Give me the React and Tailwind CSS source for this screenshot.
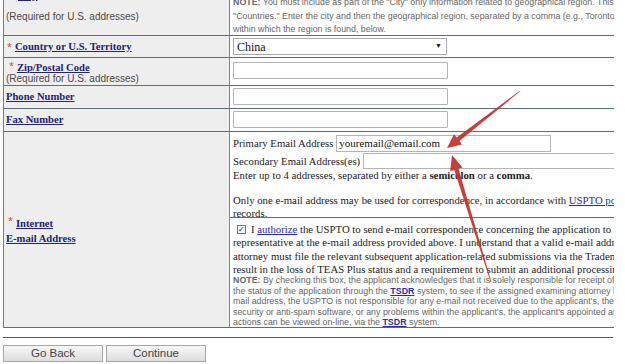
import React from "react";

function arrowPoints(tail, tip, tailW, shaftW, headLen, headW) {
  const dx = tip[0] - tail[0];
  const dy = tip[1] - tail[1];
  const len = Math.hypot(dx, dy);
  const ux = dx / len, uy = dy / len;
  const px = -uy, py = ux;
  const bx = tip[0] - ux * headLen, by = tip[1] - uy * headLen;
  const pts = [
    [tail[0] + px * tailW, tail[1] + py * tailW],
    [bx + px * shaftW, by + py * shaftW],
    [bx + px * headW, by + py * headW],
    [tip[0], tip[1]],
    [bx - px * headW, by - py * headW],
    [bx - px * shaftW, by - py * shaftW],
    [tail[0] - px * tailW, tail[1] - py * tailW],
  ];
  return pts.map((p) => p[0].toFixed(1) + "," + p[1].toFixed(1)).join(" ");
}

function Star() {
  return <span className="text-[#c8453e] text-[9px] font-normal align-top mr-[3px]">*</span>;
}

function Label({ children }) {
  return (
    <span className="font-['Liberation_Serif',serif] font-bold text-[10.6px] text-[#23236e] underline">
      {children}
    </span>
  );
}

function Field({ w = "w-[215px]" }) {
  return <div className={`${w} h-[17px] border border-[#b4b4b4] bg-white rounded-[1px]`} />;
}

const leftCls = "w-[226px] shrink-0 bg-[#eeeeee] border-r border-[#7b8a93] pl-[2px]";
const rightCls = "flex-1 min-w-0 overflow-hidden bg-white pl-[3px]";
const rowCls = "flex border-b border-[#5a6f7c]";
const sansNote = "font-['Liberation_Sans',sans-serif] text-[8.85px] text-[#666] whitespace-nowrap";
const serifTxt = "font-['Liberation_Serif',serif] text-[10.75px] text-[#222] whitespace-nowrap";

export default function App() {
  return (
    <div className="relative w-[625px] h-[364px] overflow-hidden bg-white">
      <div className="ml-[3px] w-[611px] overflow-hidden border-l border-[#6f7f8a]">
        {/* Row 1 */}
        <div className={`${rowCls} h-[36px]`}>
          <div className={`${leftCls} overflow-hidden pl-0`}>
            <div className="-mt-[13px] h-[12px] leading-[12px] pl-[4px] whitespace-nowrap">
              <Star />
              <Label>City</Label>
            </div>
            <div className="mt-[12px] leading-[12px] font-['Liberation_Sans',sans-serif] text-[10px] text-[#4a4a4a] whitespace-nowrap">
              (Required for U.S. addresses)
            </div>
          </div>
          <div className={`${rightCls}`}>
            <div className={`${sansNote} -mt-[4px] leading-[13.5px] text-[#6a6a6a]`}>
              <div>
                <b>NOTE:</b> You must include as part of the "City" only information related to geographical region. This applies to addresses in countries listed under "Regions" within
              </div>
              <div>"Countries." Enter the city and then the geographical region, separated by a comma (e.g., Toronto, Ontario). Then select the country</div>
              <div>within which the region is found, below.</div>
            </div>
          </div>
        </div>

        {/* Row 2 */}
        <div className={`${rowCls} h-[22px]`}>
          <div className={`${leftCls} flex items-center pl-[3px] whitespace-nowrap`}>
            <Star />
            <Label>Country or U.S. Territory</Label>
          </div>
          <div className={`${rightCls} pt-[2px]`}>
            <div className="w-[214px] h-[17px] border border-[#a9a9a9] bg-white flex items-center justify-between px-[3px]">
              <span className="font-['Liberation_Serif',serif] text-[12px] text-[#111]">China</span>
              <span className="text-[7px] text-[#222] mr-[1px]">▼</span>
            </div>
          </div>
        </div>

        {/* Row 3 */}
        <div className={`${rowCls} h-[28px]`}>
          <div className={`${leftCls} pt-[2px] leading-[11px] whitespace-nowrap pl-0`}>
            <div className="pl-[3px]">
              <Star />
              <Label>Zip/Postal Code</Label>
            </div>
            <div className="font-['Liberation_Sans',sans-serif] text-[10px] text-[#4a4a4a]">
              (Required for U.S. addresses)
            </div>
          </div>
          <div className={`${rightCls} pt-[4px]`}>
            <Field />
          </div>
        </div>

        {/* Row 4 */}
        <div className={`${rowCls} h-[23px]`}>
          <div className={`${leftCls} flex items-center pl-[1px]`}>
            <Label>Phone Number</Label>
          </div>
          <div className={`${rightCls} pt-[2px]`}>
            <Field />
          </div>
        </div>

        {/* Row 5 */}
        <div className={`${rowCls} h-[23px]`}>
          <div className={`${leftCls} flex items-center pl-[1px]`}>
            <Label>Fax Number</Label>
          </div>
          <div className={`${rightCls} pt-[2px]`}>
            <Field />
          </div>
        </div>

        {/* Row 6 */}
        <div className={`${rowCls} h-[196px]`}>
          <div className={`${leftCls} flex flex-col justify-center leading-[12px] whitespace-nowrap pl-[1px]`}>
            <div className="pl-[2px]">
              <Star />
              <Label>Internet</Label>
            </div>
            <div>
              <Label>E-mail Address</Label>
            </div>
          </div>
          <div className="flex-1 min-w-0 overflow-hidden bg-white flex flex-col">
            <div className="h-[86px] border-b border-[#5a6f7c] pl-[3px] pt-[3px]">
              <div className="flex items-center h-[17px]">
                <span className={`${serifTxt} mr-[3px]`}>Primary Email Address</span>
                <div className="w-[215px] shrink-0 h-[17px] border border-[#b4b4b4] bg-white flex items-center pl-[2px]">
                  <span className="font-['Liberation_Serif',serif] text-[11px] text-[#111]">youremail@email.com</span>
                </div>
              </div>
              <div className="flex items-center h-[16px] mt-[1px]">
                <span className={`${serifTxt} mr-[3px]`}>Secondary Email Address(es)</span>
                <div className="w-[300px] shrink-0 h-[16px] border border-[#b4b4b4] bg-white" />
              </div>
              <div className={`${serifTxt} leading-[12.5px]`}>
                <div>
                  Enter up to 4 addresses, separated by either a <b>semicolon</b> or a <b>comma</b>.
                </div>
                <div className="h-[12.5px]" />
                <div>
                  Only one e-mail address may be used for correspondence, in accordance with{" "}
                  <span className="text-[#2a2aa8] underline">USPTO policy</span> and Office
                </div>
                <div>records.</div>
              </div>
            </div>
            <div className="flex-1 pl-[3px] pt-[5px]">
              <div className={`${serifTxt} leading-[13.3px]`}>
                <div className="flex items-center">
                  <span className="inline-flex shrink-0 items-center justify-center w-[9px] h-[9px] border border-[#777] bg-[#f4f4f4] ml-[4px] mr-[5px] text-[8px] leading-none text-[#222]">
                    ✓
                  </span>
                  <span>
                    I <span className="text-[#2a2aa8] underline">authorize</span> the USPTO to send e-mail correspondence concerning the application to the applicant, the applicant's attorney, or the
                  </span>
                </div>
                <div>representative at the e-mail address provided above. I understand that a valid e-mail address must be maintained by the applicant or the applicant's</div>
                <div>attorney must file the relevant subsequent application-related submissions via the Trademark Electronic Application System (TEAS). Failure to do so will</div>
                <div>result in the loss of TEAS Plus status and a requirement to submit an additional processing fee per international class of goods/services.</div>
              </div>
              <div className={`${sansNote} leading-[10.5px] -mt-[1px]`}>
                <div>
                  <b>NOTE:</b> By checking this box, the applicant acknowledges that it is solely responsible for receipt of all e-mail correspondence and for checking
                </div>
                <div>
                  the status of the application through the{" "}
                  <b className="text-[#2a2aa8] underline">TSDR</b> system, to see if the assigned examining attorney has issued an action. Once a valid e-
                </div>
                <div>mail address, the USPTO is not responsible for any e-mail not received due to the applicant's, the applicant's attorney's or domestic representative's</div>
                <div>security or anti-spam software, or any problems within the applicant's, the applicant's appointed attorney's, or domestic representative's e-mail system.</div>
                <div>
                  actions can be viewed on-line, via the <b className="text-[#2a2aa8] underline">TSDR</b> system.
                </div>
              </div>
            </div>
          </div>
        </div>
      </div>

      <div className="ml-[3px] mt-[9px] w-[610px] h-px bg-[#5c5c5c]" />

      <div className="ml-[3px] mt-[7px] flex gap-[3px]">
        <button className="w-[100px] h-[17px] border border-[#a6a6a6] bg-gradient-to-b from-[#f7f7f7] to-[#dedede] font-['Liberation_Sans',sans-serif] text-[11.5px] text-[#444] leading-none">
          Go Back
        </button>
        <button className="w-[100px] h-[17px] border border-[#a6a6a6] bg-gradient-to-b from-[#f7f7f7] to-[#dedede] font-['Liberation_Sans',sans-serif] text-[11.5px] text-[#444] leading-none">
          Continue
        </button>
      </div>

      <svg className="absolute left-0 top-0 pointer-events-none" width="625" height="364">
        <polygon points={arrowPoints([520, 91], [447, 148], 0.4, 2.2, 14, 6.5)} fill="#c22f2a" opacity="0.92" />
        <polygon points={arrowPoints([491, 282], [452, 155], 0.4, 2.2, 15, 6.5)} fill="#c22f2a" opacity="0.92" />
      </svg>
    </div>
  );
}
